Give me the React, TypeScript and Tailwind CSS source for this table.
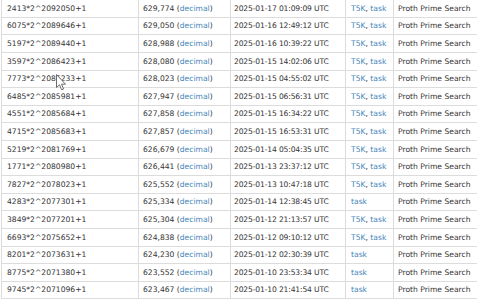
import React from 'react';

type Row = {
  prime: string;
  digits: string;
  found: string;
  t5k: boolean;
};

const rows: Row[] = [
  { prime: '2413*2^2092050+1', digits: '629,774', found: '2025-01-17 01:09:09 UTC', t5k: true },
  { prime: '6075*2^2089646+1', digits: '629,050', found: '2025-01-16 12:49:12 UTC', t5k: true },
  { prime: '5197*2^2089440+1', digits: '628,988', found: '2025-01-16 10:39:22 UTC', t5k: true },
  { prime: '3597*2^2086423+1', digits: '628,080', found: '2025-01-15 14:02:06 UTC', t5k: true },
  { prime: '7773*2^2086233+1', digits: '628,023', found: '2025-01-15 04:55:02 UTC', t5k: true },
  { prime: '6485*2^2085981+1', digits: '627,947', found: '2025-01-15 06:56:31 UTC', t5k: true },
  { prime: '4551*2^2085684+1', digits: '627,858', found: '2025-01-15 16:34:22 UTC', t5k: true },
  { prime: '4715*2^2085683+1', digits: '627,857', found: '2025-01-15 16:53:31 UTC', t5k: true },
  { prime: '5219*2^2081769+1', digits: '626,679', found: '2025-01-14 05:04:35 UTC', t5k: true },
  { prime: '1771*2^2080980+1', digits: '626,441', found: '2025-01-13 23:37:12 UTC', t5k: true },
  { prime: '7827*2^2078023+1', digits: '625,552', found: '2025-01-13 10:47:18 UTC', t5k: true },
  { prime: '4283*2^2077301+1', digits: '625,334', found: '2025-01-14 12:38:45 UTC', t5k: false },
  { prime: '3849*2^2077201+1', digits: '625,304', found: '2025-01-12 21:13:57 UTC', t5k: true },
  { prime: '6693*2^2075652+1', digits: '624,838', found: '2025-01-12 09:10:12 UTC', t5k: true },
  { prime: '8201*2^2073631+1', digits: '624,230', found: '2025-01-12 02:30:39 UTC', t5k: false },
  { prime: '8775*2^2071380+1', digits: '623,552', found: '2025-01-10 23:53:34 UTC', t5k: false },
  { prime: '9745*2^2071096+1', digits: '623,467', found: '2025-01-10 21:41:54 UTC', t5k: false },
];

// mouse pointer left over the table in the screenshot
function Cursor() {
  return (
    <svg className="absolute left-[56px] top-[74px]" width="11" height="17" viewBox="0 0 11 17">
      <path
        d="M0.5 0.5 L0.5 13.5 L3.5 10.8 L5.6 15.8 L7.6 15 L5.5 10.2 L9.5 10.2 Z"
        fill="#fff"
        stroke="#6b6b6b"
        strokeWidth="1"
        strokeLinejoin="round"
      />
    </svg>
  );
}

export default function App() {
  return (
    <div
      className="relative w-[477px] h-[300px] overflow-hidden bg-white text-[#333] text-[7.6px]"
      style={{ fontFamily: '"DejaVu Sans", Verdana, sans-serif' }}
    >
      <div className="ml-[1px] pt-[0.3px] border-l border-[#dcdcdc]">
        {rows.map((r) => (
          <div
            key={r.prime}
            className="grid grid-cols-[137px_92px_115px_48px_1fr] h-[17.6px] border-b border-[#dcdcdc] items-center leading-none"
          >
            <div className="h-full flex items-center pl-[5px] border-r border-[#dcdcdc]">{r.prime}</div>
            <div className="h-full flex items-center pl-[4px] border-r border-[#dcdcdc]">
              {r.digits}&nbsp;(<span className="text-[#3f84b8]">decimal</span>)
            </div>
            <div className="h-full flex items-center pl-[3px] border-r border-[#dcdcdc] tracking-[-0.15px]">
              {r.found}
            </div>
            <div className="h-full flex items-center pl-[5px] border-r border-[#dcdcdc] text-[#3f84b8]">
              {r.t5k ? (
                <>
                  T5K<span className="text-[#333]">,</span>&nbsp;task
                </>
              ) : (
                'task'
              )}
            </div>
            <div className="h-full flex items-center pl-[4px]">Proth Prime Search</div>
          </div>
        ))}
      </div>
      <Cursor />
    </div>
  );
}
